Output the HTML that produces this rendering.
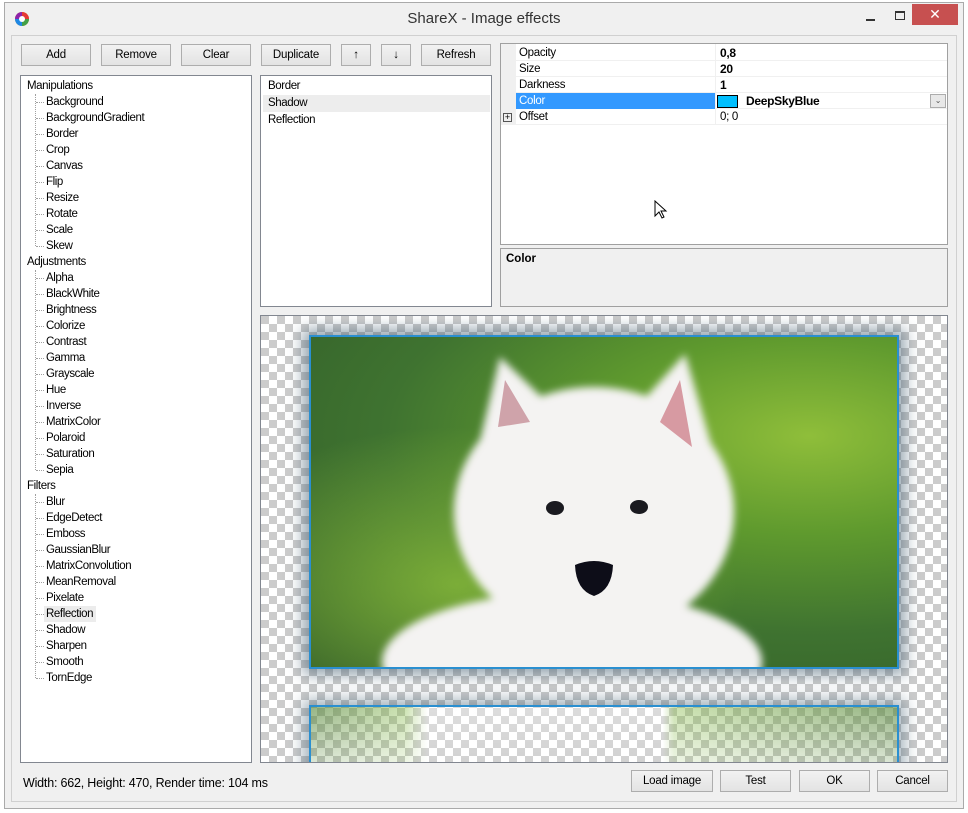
<!DOCTYPE html>
<html><head><meta charset="utf-8"><style>
*{box-sizing:border-box;margin:0;padding:0}
body{width:968px;height:813px;background:#fff;font-family:"Liberation Sans",sans-serif;font-size:11px;color:#000;position:relative;overflow:hidden}
.a{position:absolute}
.btn{position:absolute;height:22px;background:linear-gradient(#f2f2f2,#e3e3e3);border:1px solid #adadad;text-align:center;line-height:20px;font-size:11.5px;letter-spacing:-0.2px}
.panel{position:absolute;background:#fff;border:1px solid #828790}
.ti{position:absolute;font-size:11.5px;letter-spacing:-0.4px;line-height:16px;height:16px}
.hl{position:absolute;border-top:1px dotted #a0a0a0;width:8px}
.vl{position:absolute;border-left:1px dotted #a0a0a0;width:1px}
.pr{position:absolute;left:15px;right:0;height:16px;border-bottom:1px solid #f0f0f0;line-height:16px;font-size:11.5px;letter-spacing:-0.3px}
</style></head><body>
<div class="a" style="left:4px;top:2px;width:960px;height:807px;background:#f0f0f0;border:1px solid #aaa"></div>
<svg class="a" style="left:13px;top:10px" width="18" height="18" viewBox="0 0 18 18">
<circle cx="9" cy="9" r="7" fill="#e8a020"/><path d="M9 2a7 7 0 0 1 7 7H9z" fill="#e53935"/><path d="M16 9a7 7 0 0 1-7 7V9z" fill="#43a047"/><path d="M9 16a7 7 0 0 1-7-7h7z" fill="#1e88e5"/><path d="M2 9a7 7 0 0 1 7-7v7z" fill="#8e24aa"/><circle cx="9" cy="9" r="3" fill="#fff"/></svg>
<div class="a" style="left:0;width:968px;top:10px;text-align:center;font-size:15px;color:#333">ShareX - Image effects</div>
<div class="a" style="left:866px;top:19px;width:9px;height:2px;background:#333"></div>
<div class="a" style="left:895px;top:11px;width:10px;height:9px;border:1px solid #333;border-top-width:2px"></div>
<div class="a" style="left:912px;top:4px;width:46px;height:21px;background:#c75050;color:#fff;text-align:center;font-size:14px;line-height:21px">✕</div>
<div class="a" style="left:11px;top:35px;width:946px;height:767px;border:1px solid #d0d0d0;background:#f0f0f0"></div>

<div class="btn" style="left:21px;top:44px;width:70px">Add</div>
<div class="btn" style="left:101px;top:44px;width:70px">Remove</div>
<div class="btn" style="left:181px;top:44px;width:70px">Clear</div>
<div class="btn" style="left:261px;top:44px;width:70px">Duplicate</div>
<div class="btn" style="left:341px;top:44px;width:30px">↑</div>
<div class="btn" style="left:381px;top:44px;width:30px">↓</div>
<div class="btn" style="left:421px;top:44px;width:70px">Refresh</div>

<div class="panel" style="left:20px;top:75px;width:232px;height:688px"></div>
<div class="vl" style="left:35px;top:94px;height:152px"></div>
<div class="vl" style="left:35px;top:270px;height:200px"></div>
<div class="vl" style="left:35px;top:494px;height:184px"></div>
<div id="tree"></div>

<div class="panel" style="left:260px;top:75px;width:232px;height:232px"></div>
<div class="ti" style="left:268px;top:78px">Border</div>
<div class="a" style="left:263px;top:95px;width:227px;height:17px;background:#ededed"></div>
<div class="ti" style="left:268px;top:95px">Shadow</div>
<div class="ti" style="left:268px;top:112px">Reflection</div>

<div class="panel" style="left:500px;top:43px;width:448px;height:202px;border-color:#a0a0a0">
<div class="a" style="left:0;top:0;width:15px;height:81px;background:#f0f0f0"></div>
<div class="pr" style="top:1px"><span style="padding-left:3px">Opacity</span><b class="a" style="left:204px;font-size:12px">0,8</b></div>
<div class="pr" style="top:17px"><span style="padding-left:3px">Size</span><b class="a" style="left:204px;font-size:12px">20</b></div>
<div class="pr" style="top:33px"><span style="padding-left:3px">Darkness</span><b class="a" style="left:204px;font-size:12px">1</b></div>
<div class="pr" style="top:49px"><span class="a" style="left:0;width:200px;height:16px;background:#3399ff;color:#fff;padding-left:3px">Color</span>
<span class="a" style="left:201px;top:2px;width:21px;height:13px;background:#00bfff;border:1px solid #000"></span><b class="a" style="left:230px;font-size:12px">DeepSkyBlue</b>
<span class="a" style="left:414px;top:1px;width:16px;height:14px;border:1px solid #acacac;background:#e8e8e8;font-size:8px;text-align:center;line-height:12px;color:#555">⌄</span></div>
<div class="pr" style="top:65px"><span style="padding-left:3px">Offset</span><span class="a" style="left:204px">0; 0</span></div>
<div class="a" style="left:2px;top:69px;width:9px;height:9px;border:1px solid #555;font-size:9px;line-height:7px;text-align:center">+</div>
<div class="a" style="left:214px;top:0;width:1px;height:81px;background:#f0f0f0"></div>
</div>
<svg class="a" style="left:654px;top:200px" width="14" height="20"><path d="M1 1v15l4-4 3 6 2-1-3-6h5z" fill="#fff" stroke="#000"/></svg>
<div class="a" style="left:500px;top:248px;width:448px;height:59px;border:1px solid #a0a0a0;background:#f0f0f0;padding:4px 5px;font-weight:bold;font-size:11.5px">Color</div>

<div class="a" style="left:260px;top:315px;width:688px;height:448px;border:1px solid #828790;background-color:#fff;background-image:linear-gradient(45deg,#ccc 25%,transparent 25%,transparent 75%,#ccc 75%),linear-gradient(45deg,#ccc 25%,transparent 25%,transparent 75%,#ccc 75%);background-size:16px 16px;background-position:8px 0,0 8px;overflow:hidden">
<div class="a" style="left:48px;top:19px;width:590px;height:334px;box-shadow:0 0 14px 6px rgba(60,90,110,.55);border:2px solid #2a8fd0;background:radial-gradient(ellipse at 85% 30%,#8fbe3a 0%,#5f9a2e 30%,#3f7330 60%,#2f5a28 100%);overflow:hidden">
<div class="a" style="left:0;top:0;width:100%;height:100%;background:radial-gradient(ellipse at 25% 75%,rgba(150,200,60,.7),transparent 45%)"></div>
<svg class="a" style="left:0;top:0" width="590" height="334" viewBox="309 335 590 334">
<defs><filter id="f"><feGaussianBlur stdDeviation="4"/></filter></defs>
<g filter="url(#f)" fill="#f4f3f2">
<path d="M468 480 L498 355 L550 405 L635 405 L683 352 L720 480 Z"/>
<ellipse cx="592" cy="510" rx="140" ry="125"/>
<ellipse cx="570" cy="660" rx="190" ry="70"/>
</g>
<path d="M503 378 L496 425 L528 420 Z" fill="#b06070" opacity=".55"/>
<path d="M678 378 L690 445 L658 420 Z" fill="#c05060" opacity=".55"/>
<ellipse cx="553" cy="506" rx="9" ry="7" fill="#1a1a20"/>
<ellipse cx="637" cy="505" rx="9" ry="7" fill="#1a1a20"/>
<path d="M573 563 Q592 555 611 563 Q610 588 592 594 Q574 588 573 563Z" fill="#0d0d18"/>
</svg>
</div>
<div class="a" style="left:48px;top:389px;width:590px;height:70px;box-shadow:0 0 14px 6px rgba(60,90,110,.45);border:2px solid #2a8fd0;border-bottom:none;overflow:hidden">
<div class="a" style="left:0;top:0;width:100%;height:100%;background:linear-gradient(90deg,rgba(80,130,50,.6) 0%,rgba(140,190,80,.45) 16%,rgba(255,255,255,.35) 20%,rgba(255,255,255,.3) 60%,rgba(140,190,80,.45) 62%,rgba(80,130,50,.6) 100%);-webkit-mask-image:linear-gradient(#000,rgba(0,0,0,.2));mask-image:linear-gradient(#000,rgba(0,0,0,.2))"></div>
</div>
</div>

<div class="a" style="left:23px;top:776px;font-size:12.5px;letter-spacing:-0.2px">Width: 662, Height: 470, Render time: 104 ms</div>
<div class="btn" style="left:631px;top:770px;width:82px">Load image</div>
<div class="btn" style="left:720px;top:770px;width:71px">Test</div>
<div class="btn" style="left:799px;top:770px;width:71px">OK</div>
<div class="btn" style="left:877px;top:770px;width:71px">Cancel</div>

<script>
var items=[["Manipulations",0],["Background",1],["BackgroundGradient",1],["Border",1],["Crop",1],["Canvas",1],["Flip",1],["Resize",1],["Rotate",1],["Scale",1],["Skew",1],["Adjustments",0],["Alpha",1],["BlackWhite",1],["Brightness",1],["Colorize",1],["Contrast",1],["Gamma",1],["Grayscale",1],["Hue",1],["Inverse",1],["MatrixColor",1],["Polaroid",1],["Saturation",1],["Sepia",1],["Filters",0],["Blur",1],["EdgeDetect",1],["Emboss",1],["GaussianBlur",1],["MatrixConvolution",1],["MeanRemoval",1],["Pixelate",1],["Reflection",1],["Shadow",1],["Sharpen",1],["Smooth",1],["TornEdge",1]];
var h="";items.forEach(function(it,i){var y=78+i*16;
if(it[1]){h+='<div class="hl" style="left:36px;top:'+(y+8)+'px"></div>';
if(it[0]=="Reflection")h+='<div class="a" style="left:44px;top:'+(y)+'px;width:52px;height:16px;background:#ececec"></div>';
h+='<div class="ti" style="left:46px;top:'+y+'px">'+it[0]+'</div>';}
else h+='<div class="ti" style="left:27px;top:'+y+'px">'+it[0]+'</div>';});
document.getElementById("tree").innerHTML=h;
</script>
</body></html>
